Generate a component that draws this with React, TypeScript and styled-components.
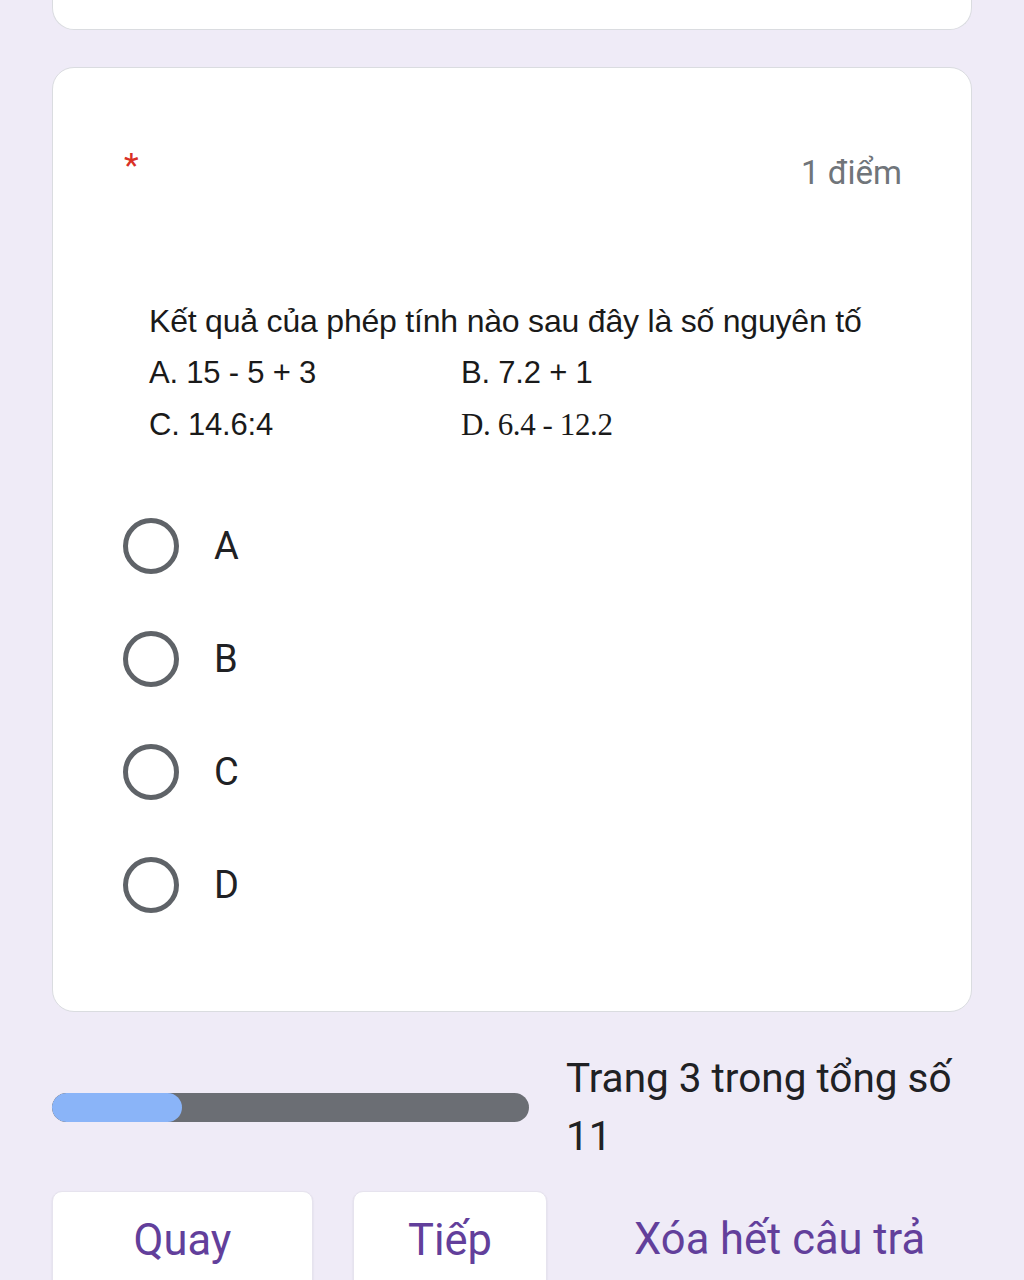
import React from 'react';
import styled, { createGlobalStyle } from 'styled-components';

const GlobalStyle = createGlobalStyle`
  html, body {
    margin: 0;
    padding: 0;
    background: #efebf7;
    font-family: Roboto, "Noto Sans", "Liberation Sans", sans-serif;
    color: #202124;
  }
`;

const Page = styled.div`
  display: flex;
  flex-direction: column;
  padding: 0 52px 0 52px;
  height: 1280px;
  overflow: hidden;
  box-sizing: border-box;

  & > * {
    flex-shrink: 0;
  }
`;

const PrevCard = styled.div`
  height: 30px;
  background: #fff;
  border: 1.5px solid #dadce0;
  border-top: none;
  border-radius: 0 0 22px 22px;
  box-sizing: border-box;
`;

const Card = styled.div`
  margin-top: 37px;
  background: #fff;
  border: 1.5px solid #dadce0;
  border-radius: 22px;
  padding: 84px 69px 70px 71px;
  display: flex;
  flex-direction: column;
`;

const Header = styled.div`
  display: flex;
  justify-content: space-between;
  align-items: flex-start;
  height: 42px;
`;

const Required = styled.span`
  color: #d93025;
  font-size: 34px;
  line-height: 34px;
  margin-top: -4px;
`;

const Points = styled.span`
  color: #70757a;
  font-size: 33px;
  line-height: 42px;
`;

const Question = styled.div`
  margin-top: 101px;
  padding-left: 25px;
  font-family: "Liberation Sans", Arial, sans-serif;
  font-size: 32px;
  line-height: 52px;
  color: #1a1a1a;
  letter-spacing: -0.2px;
`;

const Choices = styled.div`
  display: grid;
  grid-template-columns: 312px auto;
`;

const Choice = styled.span<{ $serif?: boolean }>`
  font-family: ${p => (p.$serif ? '"Liberation Serif", "Times New Roman", serif' : '"Liberation Sans", Arial, sans-serif')};
  font-size: 31px;
  letter-spacing: ${p => (p.$serif ? '-0.4px' : '-0.2px')};
`;

const Options = styled.div`
  margin-top: 38px;
  margin-left: -1px;
  display: flex;
  flex-direction: column;
`;

const Option = styled.label`
  display: flex;
  align-items: center;
  height: 113px;
  gap: 35px;
`;

const Radio = styled.span`
  width: 56px;
  height: 56px;
  box-sizing: border-box;
  border: 5px solid #5f6368;
  border-radius: 50%;
  flex-shrink: 0;
`;

const OptionLabel = styled.span`
  font-size: 38px;
  line-height: 1;
  color: #202124;
`;

const ProgressRow = styled.div`
  margin-top: 37px;
  display: flex;
  align-items: center;
  gap: 37px;
`;

const Track = styled.div`
  width: 477px;
  height: 29px;
  border-radius: 15px;
  background: #6b6e74;
  flex-shrink: 0;
  overflow: hidden;
`;

const Fill = styled.div`
  height: 100%;
  border-radius: 15px;
  background: #8ab4f8;
`;

const PageText = styled.div`
  font-size: 40.5px;
  line-height: 58px;
  color: #202124;
  width: 400px;
`;

const Buttons = styled.div`
  margin-top: 26px;
  display: flex;
  align-items: flex-start;
  gap: 40px;
`;

const Button = styled.button<{ $width: number; $flat?: boolean }>`
  width: ${p => p.$width}px;
  height: 130px;
  flex-shrink: 0;
  display: flex;
  justify-content: ${p => (p.$flat ? 'flex-start' : 'center')};
  align-items: flex-start;
  padding: 27px 0 0 ${p => (p.$flat ? '47px' : '0')};
  background: ${p => (p.$flat ? 'transparent' : '#fff')};
  border: ${p => (p.$flat ? 'none' : '1px solid #e6e3ee')};
  border-radius: 10px;
  box-shadow: ${p => (p.$flat ? 'none' : '0 1px 2px rgba(60, 64, 67, 0.12)')};
  font-family: Roboto, "Noto Sans", sans-serif;
  font-size: 43.5px;
  color: #623f9b;
  line-height: 1;
  box-sizing: border-box;
  white-space: nowrap;
`;

const answers = ['A', 'B', 'C', 'D'];

export default function App() {
  const page = 3;
  const total = 11;
  return (
    <>
      <GlobalStyle />
      <Page>
        <PrevCard />
        <Card>
          <Header>
            <Required>*</Required>
            <Points>1 điểm</Points>
          </Header>
          <Question>
            <div>Kết quả của phép tính nào sau đây là số nguyên tố</div>
            <Choices>
              <Choice>A. 15 - 5 + 3</Choice>
              <Choice>B. 7.2 + 1</Choice>
              <Choice>C. 14.6:4</Choice>
              <Choice $serif>D. 6.4 - 12.2</Choice>
            </Choices>
          </Question>
          <Options>
            {answers.map(a => (
              <Option key={a}>
                <Radio />
                <OptionLabel>{a}</OptionLabel>
              </Option>
            ))}
          </Options>
        </Card>
        <ProgressRow>
          <Track>
            <Fill style={{ width: `${(130 / 477) * 100}%` }} />
          </Track>
          <PageText>
            Trang {page} trong tổng số {total}
          </PageText>
        </ProgressRow>
        <Buttons>
          <Button $width={261}>Quay</Button>
          <Button $width={194}>Tiếp</Button>
          <Button $width={380} $flat>Xóa hết câu trả</Button>
        </Buttons>
      </Page>
    </>
  );
}
